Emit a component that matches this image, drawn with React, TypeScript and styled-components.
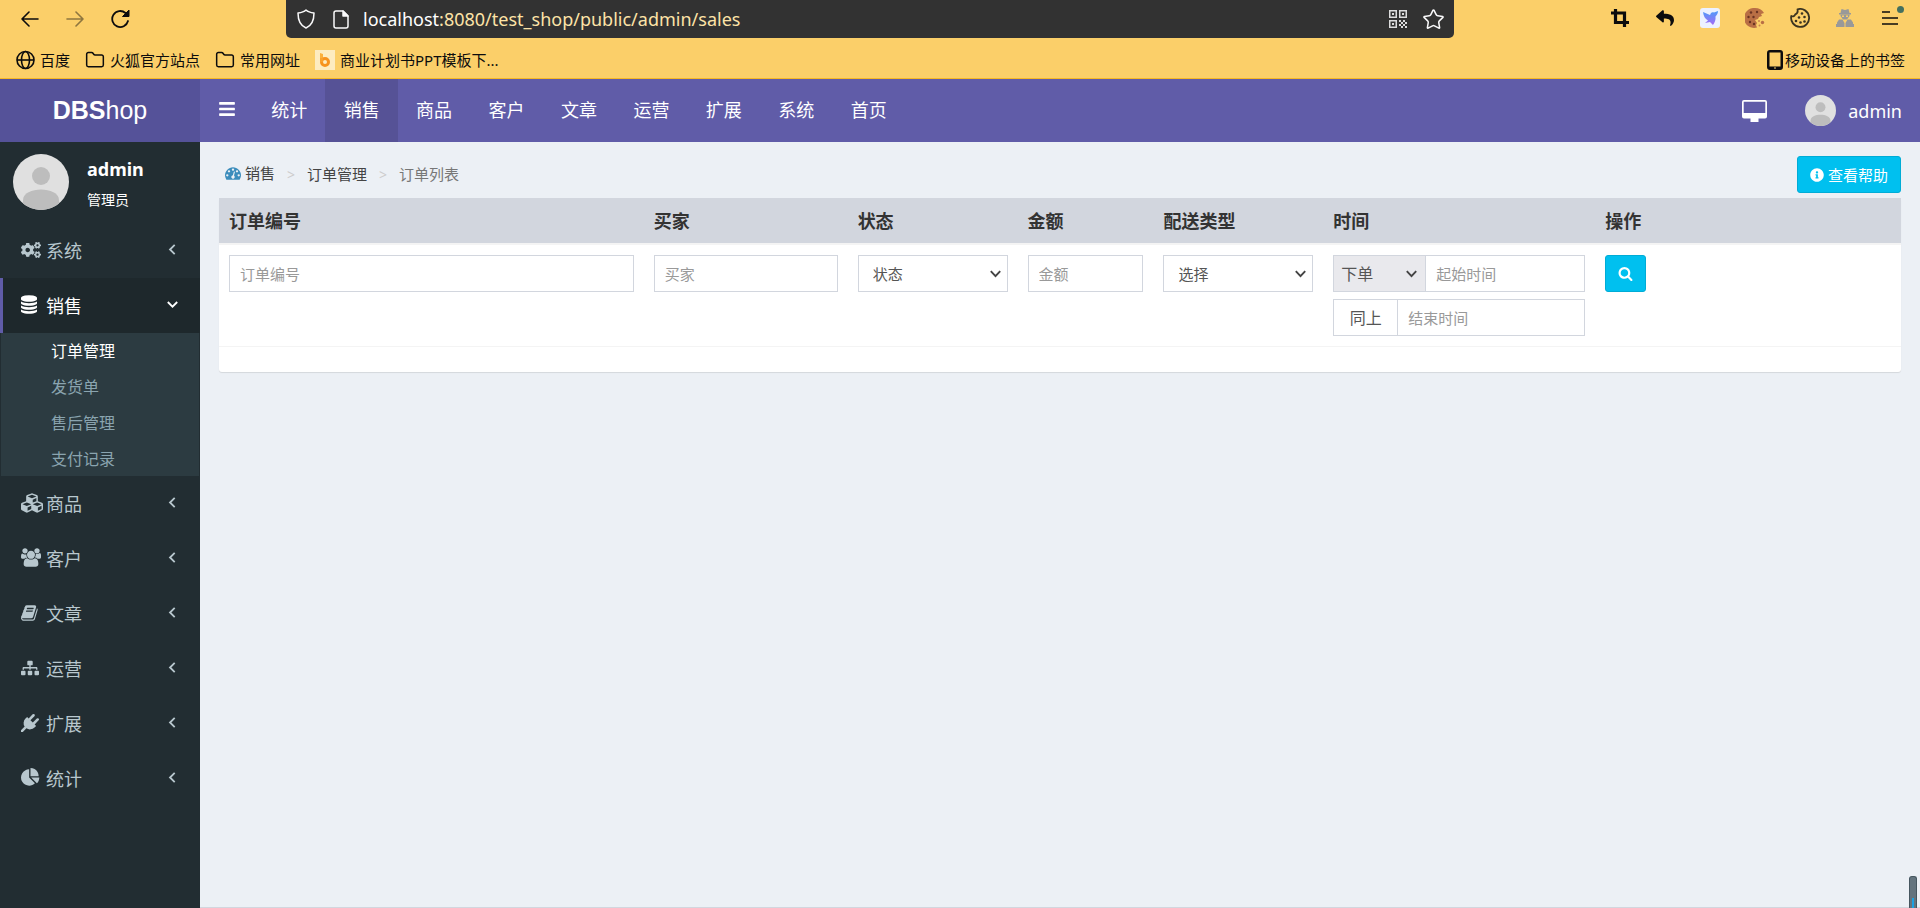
import React from "react";
import styled, { createGlobalStyle, css } from "styled-components";
import { FaBars, FaCogs, FaCubes, FaSitemap, FaInfoCircle, FaReply } from "react-icons/fa";
import { Folder, Star } from "lucide-react";

const Global = createGlobalStyle`
  * { box-sizing: border-box; }
  html, body { margin: 0; padding: 0; }
  body {
    font-family: "Noto Sans", "Noto Sans CJK SC", sans-serif;
    font-size: 15px;
    color: #333;
    background: #ecf0f5;
  }
  a { color: inherit; text-decoration: none; }
  button, input, select { font-family: inherit; margin: 0; }
  ul { list-style: none; margin: 0; padding: 0; }
  svg { display: block; flex: none; }
`;

const Page = styled.div`
  min-height: 100vh;
  display: flex;
  flex-direction: column;
`;

/* Browser chrome */
const Chrome = styled.div`
  background: #fbcf69;
  border-bottom: 1px solid #f7b824;
  color: #0c0c0d;
`;
const Toolbar = styled.div`
  height: 38px;
  display: flex;
  align-items: flex-start;
`;
const NavButtons = styled.div`
  width: 286px;
  flex: none;
  padding: 7px 0 0 18px;
  display: flex;
  gap: 21px;
`;
const IconButton = styled.button<{ $dim?: boolean }>`
  border: 0;
  background: none;
  padding: 0;
  color: inherit;
  min-width: 24px;
  height: 24px;
  display: flex;
  align-items: center;
  justify-content: center;
  position: relative;
  opacity: ${(p) => (p.$dim ? 0.45 : 1)};
`;
const AddressBar = styled.div`
  flex: 1;
  height: 38px;
  padding: 0 9px 0 11px;
  display: flex;
  align-items: center;
  gap: 14px;
  background: #323232;
  color: #f9f9fa;
  border-radius: 0 0 5px 5px;
`;
const SiteIcons = styled.div`
  display: flex;
  align-items: center;
  gap: 18px;
`;
const Address = styled.div`
  flex: 1;
  font-size: 18px;
  line-height: 36px;
  color: #fde3a7;
  b { font-weight: 400; color: #fff; }
`;
const Extensions = styled.div`
  width: 466px;
  flex: none;
  padding: 6px 18px 0 0;
  display: flex;
  justify-content: flex-end;
  gap: 21px;
`;
const Dot = styled.span`
  position: absolute;
  top: 0;
  right: -2px;
  width: 7px;
  height: 7px;
  border-radius: 50%;
  background: #44705e;
`;
const Bookmarks = styled.div`
  height: 40px;
  padding: 4px 15px 0 16px;
  display: flex;
  align-items: center;
  gap: 15px;
`;
const Bookmark = styled.a<{ $end?: boolean }>`
  display: flex;
  align-items: center;
  gap: ${(p) => (p.$end ? 2 : 5)}px;
  margin-left: ${(p) => (p.$end ? "auto" : 0)};
  font-size: 15px;
  line-height: 20px;
  white-space: nowrap;
`;

/* Application header */
const Header = styled.header`
  height: 63px;
  display: flex;
  background: #605ca8;
  color: #fff;
`;
const Logo = styled.a`
  width: 200px;
  background: #555299;
  font: 25px/63px "Liberation Sans", sans-serif;
  text-align: center;
`;
const Toggle = styled.button`
  width: 53px;
  border: 0;
  padding: 0 0 3px 18px;
  background: none;
  color: #fff;
  display: flex;
  align-items: center;
`;
const TopNav = styled.nav`
  width: 652px;
  display: flex;
`;
const TopLink = styled.a<{ $active?: boolean }>`
  flex: 1;
  font-size: 18px;
  line-height: 62px;
  text-align: center;
  background: ${(p) => (p.$active ? "#565296" : "none")};
`;
const HeaderRight = styled.div`
  margin-left: auto;
  padding-right: 18px;
  display: flex;
  align-items: center;
  gap: 38px;
`;
const Account = styled.a`
  display: flex;
  align-items: center;
  gap: 12px;
  font-size: 18px;
`;

/* Sidebar */
const Body = styled.div`
  flex: 1;
  display: flex;
`;
const Sidebar = styled.aside`
  width: 200px;
  flex: none;
  background: #222d32;
  color: #b8c7ce;
`;
const UserPanel = styled.div`
  height: 81px;
  padding: 12px 13px;
  display: flex;
  gap: 18px;
  color: #fff;
`;
const UserInfo = styled.div`
  display: flex;
  flex-direction: column;
  gap: 9px;
  padding-top: 3px;
  strong { font-size: 18px; line-height: 24px; font-weight: 700; }
  span { font-size: 14px; line-height: 20px; }
`;
const MenuLink = styled.a<{ $active?: boolean }>`
  height: 55px;
  padding: 0 22px 2px 18px;
  display: flex;
  align-items: center;
  border-left: 3px solid transparent;
  font-size: 18px;
  ${(p) => p.$active && css`
    color: #fff;
    background: #1e282c;
    border-left-color: #605ca8;
  `}
`;
const MenuIcon = styled.span`
  width: 25px;
`;
const MenuText = styled.span`
  flex: 1;
`;
const SubMenu = styled.ul`
  margin: 0 1px;
  height: 143px;
  background: #2c3b41;
`;
const SubLink = styled.a<{ $active?: boolean }>`
  display: block;
  padding-left: 50px;
  font-size: 16px;
  line-height: 36px;
  color: ${(p) => (p.$active ? "#fff" : "#8aa4af")};
`;

/* Content */
const Main = styled.main`
  flex: 1;
  min-width: 0;
  display: flex;
  flex-direction: column;
  background: #ecf0f5;
`;
const Content = styled.section`
  flex: 1;
  padding: 0 19px;
`;
const ContentHead = styled.div`
  height: 56px;
  padding: 14px 0 5px 6px;
  display: flex;
  align-items: flex-start;
  justify-content: space-between;
`;
const Crumbs = styled.ol`
  display: flex;
  align-items: center;
  margin: 0;
  padding: 7px 0 0;
  list-style: none;
  color: #777;
  line-height: 20px;
  li + li::before {
    content: ">";
    padding: 0 12px;
    font-size: 14px;
    color: #ccc;
  }
  a { color: #444; display: inline-flex; align-items: center; gap: 4px; }
  svg { color: #3c8dbc; }
`;
const InfoButton = styled.button<{ $width: number }>`
  width: ${(p) => p.$width}px;
  height: 37px;
  border: 1px solid #00acd6;
  border-radius: 3px;
  padding: 0;
  background: #00c0ef;
  color: #fff;
  font-size: 15px;
  display: flex;
  align-items: center;
  justify-content: center;
  gap: 4px;
`;
const Box = styled.div`
  background: #fff;
  border-radius: 3px;
  padding-bottom: 25px;
  box-shadow: 0 1px 1px rgba(0, 0, 0, 0.1);
`;
const Table = styled.table`
  width: 100%;
  table-layout: fixed;
  border-collapse: separate;
  border-spacing: 0;
  th {
    height: 47px;
    padding: 0 10px;
    background: #d2d6de;
    border-bottom: 2px solid #f4f4f4;
    text-align: left;
    font-size: 18px;
    font-weight: 700;
    line-height: 24px;
  }
  td {
    padding: 10px;
    vertical-align: top;
    border-bottom: 1px solid #f4f4f4;
  }
`;
const field = css`
  height: 37px;
  border: 1px solid #d2d6de;
  border-radius: 0;
  outline: 0;
  background-color: #fff;
  font-size: 15px;
  color: #555;
`;
const TextInput = styled.input`
  ${field}
  width: 100%;
  min-width: 0;
  flex: 1;
  padding: 0 10px;
  &::placeholder { color: #999; opacity: 1; }
`;
const SelectWrap = styled.div<{ $addon?: boolean }>`
  flex: none;
  width: ${(p) => (p.$addon ? "93px" : "100%")};
  margin-right: ${(p) => (p.$addon ? -1 : 0)}px;
  display: grid;
  align-items: center;
  > * { grid-area: 1 / 1; }
  svg { justify-self: end; margin-right: ${(p) => (p.$addon ? 9 : 7)}px; pointer-events: none; }
`;
const Select = styled.select<{ $addon?: boolean }>`
  ${field}
  width: 100%;
  appearance: none;
  padding: 0 ${(p) => (p.$addon ? 7 : 14)}px;
  ${(p) => p.$addon && css`
    background-color: #e9e9ed;
    font-size: 16px;
  `}
`;
const InputGroup = styled.div`
  display: flex;
  & + & { margin-top: 7px; }
`;
const Addon = styled.label`
  ${field}
  width: 64px;
  flex: none;
  border-right: 0;
  font-size: 16px;
  line-height: 36px;
  text-align: center;
`;
const Footer = styled.footer`
  height: 1px;
  background: #d2d6de;
`;
const ScrollThumb = styled.div`
  position: fixed;
  right: 3px;
  bottom: 0;
  width: 8px;
  height: 32px;
  padding: 21px 2px 0;
  border: 1px solid #46565f;
  border-bottom: 0;
  border-radius: 3px 3px 0 0;
  background: #64747e;
  &::after { content: ""; display: block; width: 2px; height: 10px; background: #1ba1e2; }
`;

const Glyph = ({ d, size = 18, w = 1792, h = 1792 }: { d: string; size?: number; w?: number; h?: number }) => (
  <svg width={Math.round((size * w) / h)} height={size} viewBox={`0 0 ${w} ${h}`} fill="currentColor" aria-hidden="true">
    <path d={d} />
  </svg>
);

const glyphs = {
  database: "M768 768q237 0 443-43t325-127v170q0 69-103 128t-280 93.5-385 34.5-385-34.5-280-93.5-103-128v-170q119 84 325 127t443 43zm0 768q237 0 443-43t325-127v170q0 69-103 128t-280 93.5-385 34.5-385-34.5-280-93.5-103-128v-170q119 84 325 127t443 43zm0-384q237 0 443-43t325-127v170q0 69-103 128t-280 93.5-385 34.5-385-34.5-280-93.5-103-128v-170q119 84 325 127t443 43zm0-1152q208 0 385 34.5t280 93.5 103 128v128q0 69-103 128t-280 93.5-385 34.5-385-34.5-280-93.5-103-128v-128q0-69 103-128t280-93.5 385-34.5z",
  users: "M593 896q-162 5-265 128h-134q-82 0-138-40.5t-56-118.5q0-353 124-353 6 0 43.5 21t97.5 42.5 119 21.5q67 0 133-23-5 37-5 66 0 159 93 293zm1071 637q0 120-73 189.5t-194 69.5h-874q-121 0-194-69.5t-73-189.5q0-53 3.5-103.5t14-109 26.5-108.5 43-97.5 62-81 85.5-53.5 111.5-20q10 0 43 21.5t73 48 107 48 135 21.5 135-21.5 107-48 73-48 43-21.5q61 0 111.5 20t85.5 53.5 62 81 43 97.5 26.5 108.5 14 109 3.5 103.5zm-1024-1277q0 106-75 181t-181 75-181-75-75-181 75-181 181-75 181 75 75 181zm704 384q0 159-112.5 271.5t-271.5 112.5-271.5-112.5-112.5-271.5 112.5-271.5 271.5-112.5 271.5 112.5 112.5 271.5zm576 225q0 78-56 118.5t-138 40.5h-134q-103-123-265-128 93-134 93-293 0-29-5-66 66 23 133 23 59 0 119-21.5t97.5-42.5 43.5-21q124 0 124 353zm-128-609q0 106-75 181t-181 75-181-75-75-181 75-181 181-75 181 75 75 181z",
  book: "M1639 478q40 57 18 129l-275 906q-19 64-76.5 107.5t-122.5 43.5h-923q-77 0-148.5-53.5t-99.5-131.5q-24-67-2-127 0-4 3-27t4-37q1-8-3-21.5t-3-19.5q2-11 8-21t16.5-23.5 16.5-23.5q23-38 45-91.5t30-91.5q3-10 .5-30t-.5-28q3-11 17-28t17-23q21-36 42-92t25-90q1-9-2.5-32t.5-28q4-13 22-30.5t22-22.5q19-26 42.5-84.5t27.5-96.5q1-8-3-25.5t-2-26.5q2-8 9-18t18-23 17-21q8-12 16.5-30.5t15-35 16-36 19.5-32 26.5-23.5 36-11.5 47.5 5.5l-1 3q38-9 51-9h761q74 0 114 56t18 130l-274 906q-36 119-71.5 153.5t-128.5 34.5h-869q-27 0-38 15-11 16-1 43 24 70 144 70h923q29 0 56-15.5t35-41.5l300-987q7-22 5-57 38 15 59 43zm-1064 2q-4 13 2 22.5t20 9.5h608q13 0 25.5-9.5t16.5-22.5l21-64q4-13-2-22.5t-20-9.5h-608q-13 0-25.5 9.5t-16.5 22.5zm-83 256q-4 13 2 22.5t20 9.5h608q13 0 25.5-9.5t16.5-22.5l21-64q4-13-2-22.5t-20-9.5h-608q-13 0-25.5 9.5t-16.5 22.5z",
  plug: "M1755 453q37 38 37 90.5t-37 90.5l-401 400 150 150-160 160q-163 163-389.5 186.5t-411.5-100.5l-362 362h-181v-181l362-362q-124-185-100.5-411.5t186.5-389.5l160-160 150 150 400-401q38-37 91-37t90 37 37 90.5-37 90.5l-400 401 234 234 401-400q38-37 91-37t90 37z",
  pie: "M768 890l546 546q-106 108-247.5 168t-298.5 60q-209 0-385.5-103t-279.5-279.5-103-385.5 103-385.5 279.5-279.5 385.5-103v762zm187 6h773q0 157-60 298.5t-168 247.5zm709-128h-768v-768q209 0 385.5 103t279.5 279.5 103 385.5z",
  gauge: "M384 1152q0-53-37.5-90.5t-90.5-37.5-90.5 37.5-37.5 90.5 37.5 90.5 90.5 37.5 90.5-37.5 37.5-90.5zm192-448q0-53-37.5-90.5t-90.5-37.5-90.5 37.5-37.5 90.5 37.5 90.5 90.5 37.5 90.5-37.5 37.5-90.5zm428 481l101-382q6-26-7.5-48.5t-38.5-29.5-48 6.5-30 39.5l-101 382q-60 5-107 43.5t-63 98.5q-20 77 20 146t117 89 146-20 89-117q16-60-6-117t-72-91zm660-33q0-53-37.5-90.5t-90.5-37.5-90.5 37.5-37.5 90.5 37.5 90.5 90.5 37.5 90.5-37.5 37.5-90.5zm-640-640q0-53-37.5-90.5t-90.5-37.5-90.5 37.5-37.5 90.5 37.5 90.5 90.5 37.5 90.5-37.5 37.5-90.5zm448 192q0-53-37.5-90.5t-90.5-37.5-90.5 37.5-37.5 90.5 37.5 90.5 90.5 37.5 90.5-37.5 37.5-90.5zm320 448q0 261-141 483-19 29-54 29h-1402q-35 0-54-29-141-221-141-483 0-182 71-348t191-286 286-191 348-71 348 71 286 191 191 286 71 348z",
  search: "M1216 832q0-185-131.5-316.5t-316.5-131.5-316.5 131.5-131.5 316.5 131.5 316.5 316.5 131.5 316.5-131.5 131.5-316.5zm512 832q0 52-38 90t-90 38q-54 0-90-38l-343-342q-179 124-399 124-143 0-273.5-55.5t-225-150-150-225-55.5-273.5 55.5-273.5 150-225 225-150 273.5-55.5 273.5 55.5 225 150 150 225 55.5 273.5q0 220-124 399l343 343q37 37 37 90z",
};

const Avatar = ({ size }: { size: number }) => (
  <svg width={size} height={size} viewBox="0 0 56 56" aria-hidden="true">
    <circle cx="28" cy="28" r="28" fill="#e0e0e0" />
    <circle cx="28" cy="22" r="9" fill="#bdbdbd" />
    <path d="M10 46c0-7 9-10.500 18-10.500S46 39 46 46v3.500a28 28 0 0 1-36 0z" fill="#bdbdbd" />
  </svg>
);

const Chevron = ({ down }: { down?: boolean }) => (
  <svg width="11" height="11" viewBox="0 0 11 11" fill="none" stroke="currentColor" strokeWidth="1.8" aria-hidden="true">
    <path d={down ? "M.8 3l4.700 4.700L10.200 3" : "M7.700.8L3 5.500l4.700 4.700"} />
  </svg>
);

const Caret = () => (
  <svg width="11" height="8" viewBox="0 0 11 8" fill="none" stroke="#444" strokeWidth="1.900" aria-hidden="true">
    <path d="M.8 1.200l4.700 5 4.700-5" />
  </svg>
);

const Arrow = ({ right }: { right?: boolean }) => (
  <svg width="18" height="16" viewBox="0 0 18 16" fill="none" stroke="currentColor" strokeWidth="1.600" strokeLinecap="round" strokeLinejoin="round" aria-hidden="true">
    <path d={right ? "M1 8h16M10 1l7 7-7 7" : "M17 8H1M8 1L1 8l7 7"} />
  </svg>
);

const Reload = () => (
  <svg width="19" height="20" viewBox="0 0 19 20" aria-hidden="true">
    <path d="M17 12A8 8 0 1 1 14.500 4" fill="none" stroke="currentColor" strokeWidth="1.800" strokeLinecap="round" />
    <path d="M18 1v6.500h-6.500z" fill="currentColor" stroke="currentColor" strokeLinejoin="round" />
  </svg>
);

const ShieldIcon = () => (
  <svg width="18" height="20" viewBox="0 0 18 20" fill="none" stroke="currentColor" strokeWidth="1.500" strokeLinejoin="round" aria-hidden="true">
    <path d="M9 1C7 3 4 3.700 1 4c0 7 2 12.500 8 15 6-2.500 8-8 8-15-3-.3-6-1-8-3z" />
  </svg>
);

const PageIcon = () => (
  <svg width="16" height="19" viewBox="0 0 16 19" fill="none" stroke="currentColor" strokeWidth="1.500" strokeLinejoin="round" aria-hidden="true">
    <path d="M3 1h7l5 5v10a2 2 0 0 1-2 2H3a2 2 0 0 1-2-2V3a2 2 0 0 1 2-2z" />
    <path d="M10 1v5h5z" fill="currentColor" />
  </svg>
);

const QrIcon = () => (
  <svg width="20" height="20" viewBox="0 0 20 20" fill="currentColor" opacity="0.85" aria-hidden="true">
    <path fillRule="evenodd" d="M1 1h8v8H1zM2.500 2.500v5h5v-5zM11 1h8v8h-8zM12.500 2.500v5h5v-5zM1 11h8v8H1zM2.500 12.500v5h5v-5z" />
    <path d="M4 4h2v2H4zM14 4h2v2h-2zM4 14h2v2H4zM11 11h2v2h-2zM15 11h2v2h-2zM13 13h2v2h-2zM17 13h2v2h-2zM11 15h2v2h-2zM15 15h2v2h-2zM13 17h2v2h-2zM17 17h2v2h-2z" />
  </svg>
);

const GlobeIcon = () => (
  <svg width="19" height="20" viewBox="0 0 19 20" fill="none" stroke="currentColor" strokeWidth="1.600" aria-hidden="true">
    <circle cx="9.500" cy="10" r="8.500" />
    <ellipse cx="9.500" cy="10" rx="4" ry="8.500" />
    <path d="M1 10h17" />
  </svg>
);

const CropIcon = () => (
  <svg width="18" height="18" viewBox="0 0 18 18" fill="none" stroke="currentColor" strokeWidth="3.200" aria-hidden="true">
    <path d="M4.500 0v13.500H18M0 4h13.500v14" />
  </svg>
);

const Bird = () => (
  <svg width="20" height="20" viewBox="0 0 20 20" aria-hidden="true">
    <defs>
      <linearGradient id="bird" x1="0" y1="0" x2="0" y2="1">
        <stop offset="0" stopColor="#4f9cf9" />
        <stop offset="1" stopColor="#a46bf5" />
      </linearGradient>
    </defs>
    <rect width="20" height="20" rx="3" fill="#edf2ff" />
    <path d="M3 4l7 3 1-2c1-1 2-1 3-.5L18 3c0 2-1 4-2.500 5.500C16 12 14.500 15 13 17l-3-3-5 1 3-2.500C5 11 3.500 8 3 4z" fill="url(#bird)" />
  </svg>
);

const BittenCookie = () => (
  <svg width="20" height="20" viewBox="0 0 20 20" aria-hidden="true">
    <path d="M10 0c4 0 7 1.500 9 5l-3 1 1 2-3 1-1 2-3 1 2 3-1 2 1 2.500A10 10 0 1 1 10 0z" fill="#b96f45" />
    <g fill="#6a3423">
      <circle cx="6" cy="4.500" r="1.200" /><circle cx="12" cy="4" r="1.200" /><circle cx="3.500" cy="9" r="1.200" />
      <circle cx="8.500" cy="9" r="1.200" /><circle cx="5" cy="14" r="1.200" /><circle cx="9" cy="16" r="1.200" />
    </g>
    <circle cx="14" cy="13" r="1" fill="#c98350" />
    <circle cx="17.500" cy="14.500" r="1.700" fill="#b96f45" />
    <circle cx="14.500" cy="17.500" r="1" fill="#c98350" />
  </svg>
);

const CookieOutline = () => (
  <svg width="20" height="20" viewBox="0 0 20 20" aria-hidden="true">
    <path d="M7.500 1.300A9 9 0 1 1 1.300 8c2 .7 3.500.2 4-1.700C7.500 5.500 8 3.500 7.500 1.300z" fill="none" stroke="#3b3420" strokeWidth="1.800" strokeLinejoin="round" />
    <g fill="#3b3420">
      <circle cx="12" cy="5.500" r="1.300" /><circle cx="9" cy="9.500" r="1.300" /><circle cx="14.500" cy="9" r="1.300" />
      <circle cx="6" cy="13" r="1.300" /><circle cx="10.500" cy="14.500" r="1.300" /><circle cx="14.500" cy="13.500" r="1.300" />
    </g>
  </svg>
);

const SpyIcon = () => (
  <svg width="18" height="18" viewBox="0 0 18 18" fill="#999" aria-hidden="true">
    <path d="M5.500 0c1.500 0 2 1 3.500 1s2-1 3.500-1l1 4H15v1.500H3V4h1.500z" />
    <path fillRule="evenodd" d="M4.500 5.500h9V7L11 10.500H7L4.500 7zM6 6.500V8h2V6.500zM10 6.500V8h2V6.500z" />
    <path d="M3 10.500h3.500L8.500 14v4H1v-4.500zM15 10.500h-3.500L9.500 14v4H17v-4.500z" />
    <path d="M0 15h2v3H0zM16 15h2v3h-2z" />
  </svg>
);

const MenuLines = () => (
  <svg width="16" height="14" viewBox="0 0 16 14" stroke="currentColor" strokeWidth="1.600" aria-hidden="true">
    <path d="M0 1h8M0 7h16M0 13h16" />
  </svg>
);

const Phone = () => (
  <svg width="16" height="20" viewBox="0 0 16 20" aria-hidden="true">
    <path fillRule="evenodd" d="M3 0h10a3 3 0 0 1 3 3v14a3 3 0 0 1-3 3H3a3 3 0 0 1-3-3V3a3 3 0 0 1 3-3zm-.5 2.500V16.500h11V2.500z" fill="currentColor" />
    <rect x="7" y="17.500" width="2" height="1" fill="#fbcf69" />
  </svg>
);

const Monitor = () => (
  <svg width="25" height="22" viewBox="0 0 25 22" aria-hidden="true">
    <path fillRule="evenodd" d="M2 0h21a2 2 0 0 1 2 2v14.500a2 2 0 0 1-2 2h-6.500V20v2h-8v-3.500H2a2 2 0 0 1-2-2V2a2 2 0 0 1 2-2zm-.3 1.700V13h21.600V1.700z" fill="currentColor" />
  </svg>
);

const OrangeMark = () => (
  <svg width="20" height="20" viewBox="0 0 20 20" aria-hidden="true">
    <rect width="20" height="20" fill="#fdecc0" />
    <path d="M5 3l3 1v6.500H5z" fill="#fbb03b" />
    <circle cx="10" cy="12" r="3.500" fill="none" stroke="#f7931e" strokeWidth="3" />
    <path d="M5 8h3v4H5z" fill="#f9a12c" />
  </svg>
);

const topLinks = ["统计", "销售", "商品", "客户", "文章", "运营", "扩展", "系统", "首页"];
const subLinks = ["订单管理", "发货单", "售后管理", "支付记录"];
const menu = [
  { label: "系统", icon: <FaCogs size={20} /> },
  { label: "销售", icon: <Glyph d={glyphs.database} w={1536} size={19} />, active: true },
  { label: "商品", icon: <FaCubes size={22} /> },
  { label: "客户", icon: <Glyph d={glyphs.users} w={1920} size={19} /> },
  { label: "文章", icon: <Glyph d={glyphs.book} /> },
  { label: "运营", icon: <FaSitemap size={18} /> },
  { label: "扩展", icon: <Glyph d={glyphs.plug} /> },
  { label: "统计", icon: <Glyph d={glyphs.pie} size={19} /> },
];

export default function App() {
  return (
    <Page>
      <Global />
      <Chrome>
        <Toolbar>
          <NavButtons>
            <IconButton aria-label="后退"><Arrow /></IconButton>
            <IconButton aria-label="前进" $dim><Arrow right /></IconButton>
            <IconButton aria-label="刷新"><Reload /></IconButton>
          </NavButtons>
          <AddressBar>
            <SiteIcons>
              <ShieldIcon />
              <PageIcon />
            </SiteIcons>
            <Address><b>localhost</b>:8080/test_shop/public/admin/sales</Address>
            <QrIcon />
            <Star size={23} strokeWidth={1.6} />
          </AddressBar>
          <Extensions>
            <IconButton aria-label="截图"><CropIcon /></IconButton>
            <IconButton aria-label="撤销"><FaReply size={18} /></IconButton>
            <IconButton aria-label="飞鸟"><Bird /></IconButton>
            <IconButton aria-label="曲奇"><BittenCookie /></IconButton>
            <IconButton aria-label="管理曲奇"><CookieOutline /></IconButton>
            <IconButton aria-label="隐身"><SpyIcon /></IconButton>
            <IconButton aria-label="菜单"><MenuLines /><Dot /></IconButton>
          </Extensions>
        </Toolbar>
        <Bookmarks>
          <Bookmark href="#"><GlobeIcon />百度</Bookmark>
          <Bookmark href="#"><Folder size={20} strokeWidth={1.8} />火狐官方站点</Bookmark>
          <Bookmark href="#"><Folder size={20} strokeWidth={1.8} />常用网址</Bookmark>
          <Bookmark href="#"><OrangeMark />商业计划书PPT模板下...</Bookmark>
          <Bookmark href="#" $end><Phone />移动设备上的书签</Bookmark>
        </Bookmarks>
      </Chrome>

      <Header>
        <Logo href="#"><b>DBS</b>hop</Logo>
        <Toggle aria-label="切换导航"><FaBars size={18} /></Toggle>
        <TopNav>
          {topLinks.map((t) => <TopLink key={t} href="#" $active={t === "销售"}>{t}</TopLink>)}
        </TopNav>
        <HeaderRight>
          <a href="#" aria-label="前台"><Monitor /></a>
          <Account href="#"><Avatar size={31} />admin</Account>
        </HeaderRight>
      </Header>

      <Body>
        <Sidebar>
          <UserPanel>
            <Avatar size={56} />
            <UserInfo><strong>admin</strong><span>管理员</span></UserInfo>
          </UserPanel>
          <ul>
            {menu.map((m) => (
              <li key={m.label}>
                <MenuLink href="#" $active={m.active}>
                  <MenuIcon>{m.icon}</MenuIcon>
                  <MenuText>{m.label}</MenuText>
                  <Chevron down={m.active} />
                </MenuLink>
                {m.active && (
                  <SubMenu>
                    {subLinks.map((s, i) => <li key={s}><SubLink href="#" $active={i === 0}>{s}</SubLink></li>)}
                  </SubMenu>
                )}
              </li>
            ))}
          </ul>
        </Sidebar>

        <Main>
          <Content>
            <ContentHead>
              <Crumbs>
                <li><a href="#"><Glyph d={glyphs.gauge} size={16} />销售</a></li>
                <li><a href="#">订单管理</a></li>
                <li>订单列表</li>
              </Crumbs>
              <InfoButton $width={104}><FaInfoCircle size={14} />查看帮助</InfoButton>
            </ContentHead>
            <Box>
              <Table>
                <colgroup>
                  {[25, 12, 10, 8, 10, 16, 18].map((w, i) => <col key={i} width={`${w}%`} />)}
                </colgroup>
                <thead>
                  <tr>
                    {["订单编号", "买家", "状态", "金额", "配送类型", "时间", "操作"].map((h) => <th key={h}>{h}</th>)}
                  </tr>
                </thead>
                <tbody>
                  <tr>
                    <td><TextInput aria-label="订单编号" placeholder="订单编号" /></td>
                    <td><TextInput aria-label="买家" placeholder="买家" /></td>
                    <td><SelectWrap><Select aria-label="状态"><option>状态</option></Select><Caret /></SelectWrap></td>
                    <td><TextInput aria-label="金额" placeholder="金额" /></td>
                    <td><SelectWrap><Select aria-label="配送类型"><option>选择</option></Select><Caret /></SelectWrap></td>
                    <td>
                      <InputGroup>
                        <SelectWrap $addon><Select $addon aria-label="时间类型"><option>下单</option></Select><Caret /></SelectWrap>
                        <TextInput aria-label="起始时间" placeholder="起始时间" />
                      </InputGroup>
                      <InputGroup>
                        <Addon htmlFor="end-time">同上</Addon>
                        <TextInput id="end-time" placeholder="结束时间" />
                      </InputGroup>
                    </td>
                    <td><InfoButton $width={41} aria-label="搜索"><Glyph d={glyphs.search} size={15} /></InfoButton></td>
                  </tr>
                </tbody>
              </Table>
            </Box>
          </Content>
          <Footer />
        </Main>
      </Body>
      <ScrollThumb />
    </Page>
  );
}
